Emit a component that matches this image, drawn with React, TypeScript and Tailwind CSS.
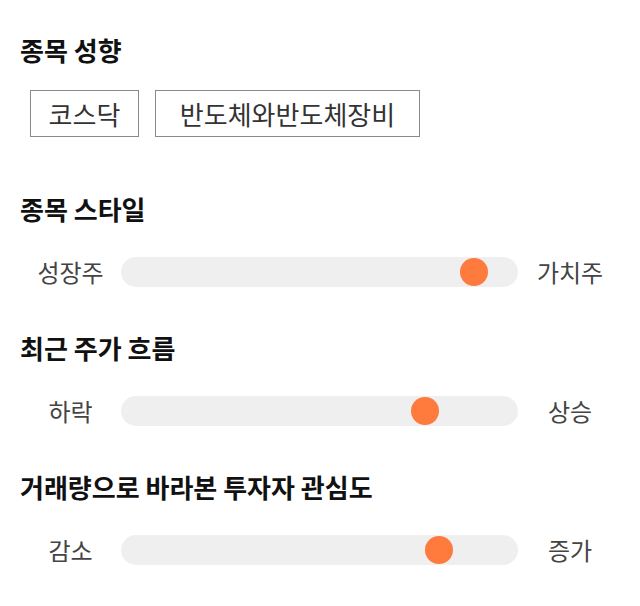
import React from 'react';

interface SliderRow {
  title: string;
  left: string;
  right: string;
  value: number; // thumb centre, px from track start
}

const rows: SliderRow[] = [
  { title: '종목 스타일', left: '성장주', right: '가치주', value: 353 },
  { title: '최근 주가 흐름', left: '하락', right: '상승', value: 304 },
  { title: '거래량으로 바라본 투자자 관심도', left: '감소', right: '증가', value: 318 },
];

const tags = [
  { label: '코스닥', width: 'w-[109px]' },
  { label: '반도체와반도체장비', width: 'w-[265px]' },
];

function Heading({ children }: { children: React.ReactNode }) {
  return <h2 className="h-8 leading-8 text-[26px] font-bold text-[#111111]">{children}</h2>;
}

function Slider({ row }: { row: SliderRow }) {
  return (
    <div className="flex items-center h-[30px] mt-[32px]">
      <div className="w-[101px] text-center text-[24px] text-[#444444]">{row.left}</div>
      <div className="relative w-[397px] h-[30px] rounded-full bg-[#efefef]">
        <div
          className="absolute top-[1px] w-[28px] h-[28px] rounded-full bg-[#ff7a3d]"
          style={{ left: row.value - 14 }}
        />
      </div>
      <div className="w-[104px] text-center text-[24px] text-[#444444]">{row.right}</div>
    </div>
  );
}

export default function App() {
  return (
    <div
      className="w-[640px] h-[606px] bg-white pl-5 pt-[34px]"
      style={{ fontFamily: '"Noto Sans CJK KR", "Noto Sans", sans-serif' }}
    >
      <Heading>종목 성향</Heading>
      <div className="flex gap-4 mt-6 ml-[10px]">
        {tags.map((t) => (
          <div
            key={t.label}
            className={`${t.width} h-[47px] border border-[#8a8a8a] flex items-center justify-center text-[26px] text-[#333333]`}
          >
            {t.label}
          </div>
        ))}
      </div>
      {rows.map((r, i) => (
        <div key={r.title} className={i === 0 ? 'mt-[56px]' : 'mt-[45px]'}>
          <Heading>{r.title}</Heading>
          <Slider row={r} />
        </div>
      ))}
    </div>
  );
}
